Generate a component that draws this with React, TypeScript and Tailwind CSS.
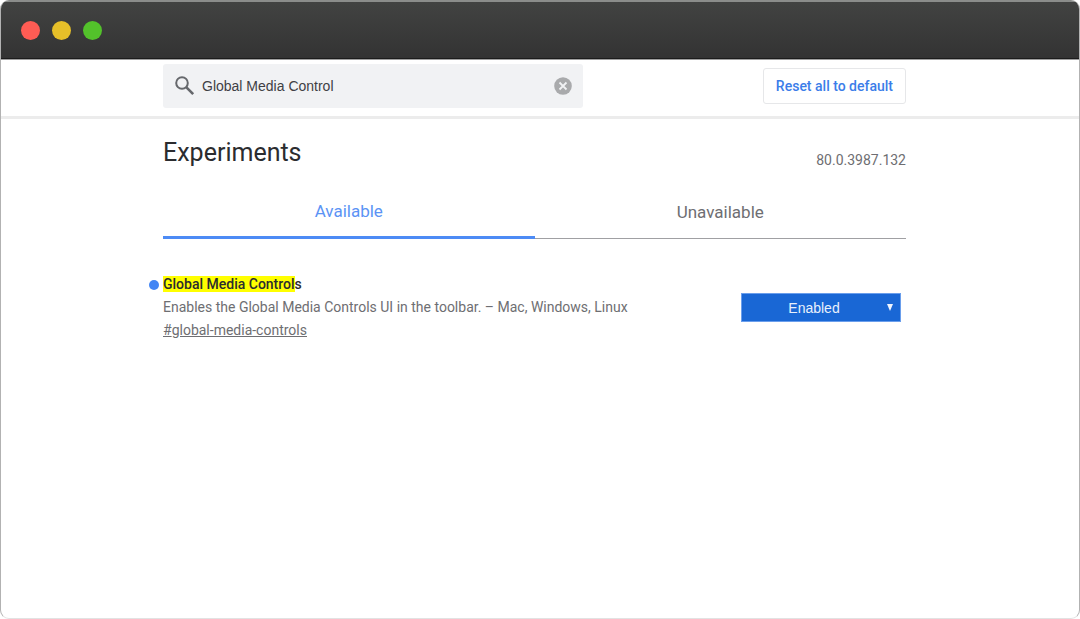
import { useState } from "react";

const VERSION = "80.0.3987.132";

const experiment = {
  id: "global-media-controls",
  title: "Global Media Controls",
  description: "Enables the Global Media Controls UI in the toolbar.",
  platforms: "Mac, Windows, Linux",
};

const tabs = ["Available", "Unavailable"];

// marks the part of the title that matches the search
const Highlight = ({ text, query }: { text: string; query: string }) => {
  const start = text.toLowerCase().indexOf(query.toLowerCase());
  if (!query || start < 0) {
    return <>{text}</>;
  }
  const end = start + query.length;
  return (
    <>
      {text.slice(0, start)}
      <mark className="bg-[#ffff00] text-inherit">{text.slice(start, end)}</mark>
      {text.slice(end)}
    </>
  );
};

const TitleBar = () => (
  <div className="flex h-[59px] items-center gap-3 border-t-2 border-b border-t-[#8b8d8b] border-b-[#1c1c1c] bg-linear-to-b from-[#424342] to-[#333333] pl-5">
    <span className="size-[19px] rounded-full bg-[#ff5c54]" />
    <span className="size-[19px] rounded-full bg-[#e6bf29]" />
    <span className="size-[19px] rounded-full bg-[#53c22b]" />
  </div>
);

const App = () => {
  const [query, setQuery] = useState("Global Media Control");
  const [tab, setTab] = useState("Available");
  const [state, setState] = useState("Enabled");

  return (
    <div className="flex min-h-screen flex-col overflow-hidden rounded-[9px] border border-t-0 border-[#b2b2b2] border-b-[#e2e2e2] bg-white font-[Roboto,sans-serif] text-sm text-[#6e6e72]">
      <TitleBar />

      <header className="border-t border-b-3 border-t-[#a0a0a0] border-b-[#ececec] pt-1 pr-[11px] pb-2">
        <div className="mx-auto flex max-w-[743px] items-center justify-between">
          <div className="flex h-11 w-[420px] items-center rounded-[3px] bg-[#f1f2f4] pr-[11px] pl-3">
            <svg viewBox="0 0 20 20" className="size-5 shrink-0" fill="none" stroke="#66686c" strokeWidth="2">
              <circle cx="7" cy="7" r="5.8" />
              <path d="M11.2 11.2 18.2 18.2" strokeWidth="2.6" />
            </svg>
            <input
              type="text"
              aria-label="Search flags"
              value={query}
              onChange={(e) => setQuery(e.target.value)}
              className="h-full min-w-0 flex-1 bg-transparent px-[7px] font-['Liberation_Sans',sans-serif] text-sm text-[#3f4044] outline-none"
            />
            <button type="button" aria-label="Clear search" onClick={() => setQuery("")}>
              <svg viewBox="0 0 18 18" className="size-[18px]">
                <circle cx="9" cy="9" r="8.8" fill="#a9aaac" />
                <path d="M5.5 5.5 12.5 12.5M12.5 5.5 5.5 12.5" stroke="#f1f2f4" strokeWidth="1.8" />
              </svg>
            </button>
          </div>
          <button
            type="button"
            onClick={() => setState("Default")}
            className="h-9 rounded-[3px] border border-[#e6e7e9] px-3 font-medium text-[#3b7de9]"
          >
            Reset all to default
          </button>
        </div>
      </header>

      <main className="pr-[11px]">
        <div className="mx-auto max-w-[743px]">
          <div className="flex items-center justify-between pt-4">
            <h1 className="text-[25px] leading-9 text-[#2b2c2f]">Experiments</h1>
            <span className="pt-3.5">{VERSION}</span>
          </div>

          <div role="tablist" className="flex pt-4">
            {tabs.map((name) => (
              <button
                key={name}
                type="button"
                role="tab"
                aria-selected={tab === name}
                onClick={() => setTab(name)}
                className={`h-[52px] flex-1 text-[17px] ${
                  tab === name
                    ? "border-b-3 border-[#4d8bf5] text-[#5b93f5]"
                    : "border-b border-[#a0a0a3]"
                }`}
              >
                {name}
              </button>
            ))}
          </div>

          {tab === "Available" && (
            <section className="flex items-center justify-between pt-[34px] pr-[5px]">
              <div className="-ml-[14px] flex">
                <span className="mt-[7px] mr-1 size-2.5 shrink-0 rounded-full bg-[#4285f4]" />
                <div className="leading-[23px]">
                  <h2 className="font-medium text-[#2b2c2f]">
                    <Highlight text={experiment.title} query={query} />
                  </h2>
                  <p>
                    {experiment.description} – {experiment.platforms}
                  </p>
                  <a href={`#${experiment.id}`} className="underline">
                    #{experiment.id}
                  </a>
                </div>
              </div>
              <div className="relative">
                <select
                  aria-label={experiment.title}
                  value={state}
                  onChange={(e) => setState(e.target.value)}
                  className="h-[29px] w-40 appearance-none border border-[#6a9eec] bg-[#1967d5] pr-3.5 text-center font-['Liberation_Sans',sans-serif] text-sm text-[#e8f0fc] [text-align-last:center]"
                >
                  <option>Default</option>
                  <option>Enabled</option>
                  <option>Disabled</option>
                </select>
                <svg
                  viewBox="0 0 6 7"
                  className="pointer-events-none absolute top-[11px] right-2 h-[7px] w-1.5"
                  fill="#f0f5fd"
                >
                  <path d="M0 0H6L3 7Z" />
                </svg>
              </div>
            </section>
          )}
        </div>
      </main>
    </div>
  );
};

export default App;
